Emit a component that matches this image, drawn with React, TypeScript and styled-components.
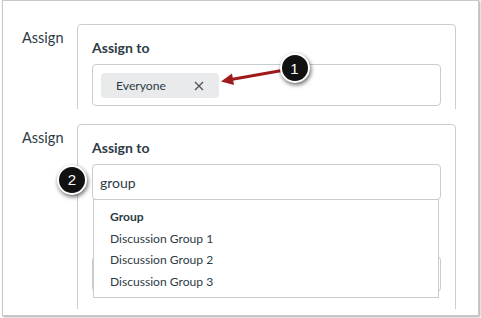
import React from 'react'
import styled, { createGlobalStyle } from 'styled-components'

const GlobalStyle = createGlobalStyle`
  html, body {
    margin: 0;
    padding: 0;
    background: #fff;
  }
  body {
    font-family: Lato, "Open Sans", "Liberation Sans", sans-serif;
    color: #2d3b45;
  }
`

const Page = styled.div`
  position: relative;
  width: 481px;
  height: 318px;
`

const Frame = styled.div`
  box-sizing: border-box;
  width: 477px;
  height: 316px;
  margin-left: 2px;
  border: 1px solid #c9c9c9;
  box-shadow: 1px 1px 2px rgba(0, 0, 0, 0.35);
  background: #fff;
  display: flex;
  flex-direction: column;
`

const Section = styled.section<{ $padTop: number; $height: number }>`
  box-sizing: border-box;
  display: flex;
  align-items: flex-start;
  height: ${p => p.$height}px;
  padding-top: ${p => p.$padTop}px;
  overflow: hidden;
  flex-shrink: 0;
`

const RowLabel = styled.div`
  box-sizing: border-box;
  width: 74px;
  flex-shrink: 0;
  padding-left: 19px;
  margin-top: 5px;
  font-size: 14.5px;
  line-height: 17px;
  color: #2d3b45;
`

const Card = styled.div`
  box-sizing: border-box;
  position: relative;
  width: 379px;
  height: 300px;
  flex-shrink: 0;
  border: 1px solid #c7cdd1;
  border-radius: 4px;
  padding: 14px 14px 0 14px;
`

const FieldTitle = styled.div`
  font-weight: 700;
  font-size: 14px;
  line-height: 17px;
  margin-bottom: 8px;
`

const TokenInput = styled.div`
  box-sizing: border-box;
  height: 42px;
  border: 1px solid #c7cdd1;
  border-radius: 4px;
  padding: 8px 8px 7px 8px;
  display: flex;
  align-items: flex-start;
`

const Chip = styled.div`
  box-sizing: border-box;
  width: 118px;
  height: 25px;
  padding: 0 15px;
  border-radius: 4px;
  background: #e8eaec;
  display: flex;
  align-items: center;
  justify-content: space-between;
  font-size: 12.2px;
  color: #2d3b45;
`

const SearchWrap = styled.div`
  position: relative;
`

const SearchInput = styled.div`
  box-sizing: border-box;
  height: 36px;
  border: 1px solid #c7cdd1;
  border-radius: 4px;
  padding: 0 7px;
  display: flex;
  align-items: center;
  font-size: 14px;
`

const HiddenField = styled.div`
  box-sizing: border-box;
  height: 36px;
  margin-top: 56px;
  border: 1px solid #c7cdd1;
  border-radius: 4px;
`

const Menu = styled.ul`
  position: absolute;
  top: 35px;
  left: 1px;
  right: 2px;
  margin: 0;
  padding: 6px 0 5px 0;
  list-style: none;
  background: #fff;
  border: 1px solid #c7cdd1;
  z-index: 2;
`

const MenuItem = styled.li<{ $header?: boolean }>`
  padding-left: 16px;
  font-size: 12.1px;
  line-height: 21.5px;
  font-weight: ${p => (p.$header ? 700 : 400)};
  color: #2d3b45;
`

const Overlay = styled.svg`
  position: absolute;
  left: 0;
  top: 0;
  pointer-events: none;
  z-index: 5;
`

const Badge = styled.div<{ $x: number; $y: number }>`
  position: absolute;
  left: ${p => p.$x}px;
  top: ${p => p.$y}px;
  box-sizing: border-box;
  width: 30px;
  height: 30px;
  border-radius: 50%;
  background: #111;
  border: 2px solid #fff;
  box-shadow: 1px 2px 4px rgba(0, 0, 0, 0.6);
  color: #fff;
  font-family: "Liberation Sans", Arial, sans-serif;
  font-size: 15px;
  display: flex;
  align-items: center;
  justify-content: center;
  z-index: 6;
`

const CloseIcon = () => (
  <svg width="10" height="10" viewBox="0 0 10 10">
    <path d="M1 1 L9 9 M9 1 L1 9" stroke="#4a5560" strokeWidth="1.3" fill="none" />
  </svg>
)

const groups = ['Discussion Group 1', 'Discussion Group 2', 'Discussion Group 3']

export default function App() {
  return (
    <Page>
      <GlobalStyle />
      <Frame>
        <Section $padTop={23} $height={108}>
          <RowLabel>Assign</RowLabel>
          <Card>
            <FieldTitle>Assign to</FieldTitle>
            <TokenInput>
              <Chip>
                <span>Everyone</span>
                <CloseIcon />
              </Chip>
            </TokenInput>
          </Card>
        </Section>
        <Section $padTop={15} $height={200}>
          <RowLabel>Assign</RowLabel>
          <Card>
            <FieldTitle>Assign to</FieldTitle>
            <SearchWrap>
              <SearchInput>group</SearchInput>
              <Menu>
                <MenuItem $header>Group</MenuItem>
                {groups.map(g => (
                  <MenuItem key={g}>{g}</MenuItem>
                ))}
              </Menu>
            </SearchWrap>
            <HiddenField />
          </Card>
        </Section>
      </Frame>
      <Overlay width={481} height={318}>
        <line x1={282} y1={70.5} x2={231} y2={79.5} stroke="#9e1b1b" strokeWidth={3} />
        <polygon points="221,81.5 232,73.5 234,85" fill="#9e1b1b" />
      </Overlay>
      <Badge $x={279.5} $y={53}>1</Badge>
      <Badge $x={57} $y={164.5}>2</Badge>
    </Page>
  )
}
